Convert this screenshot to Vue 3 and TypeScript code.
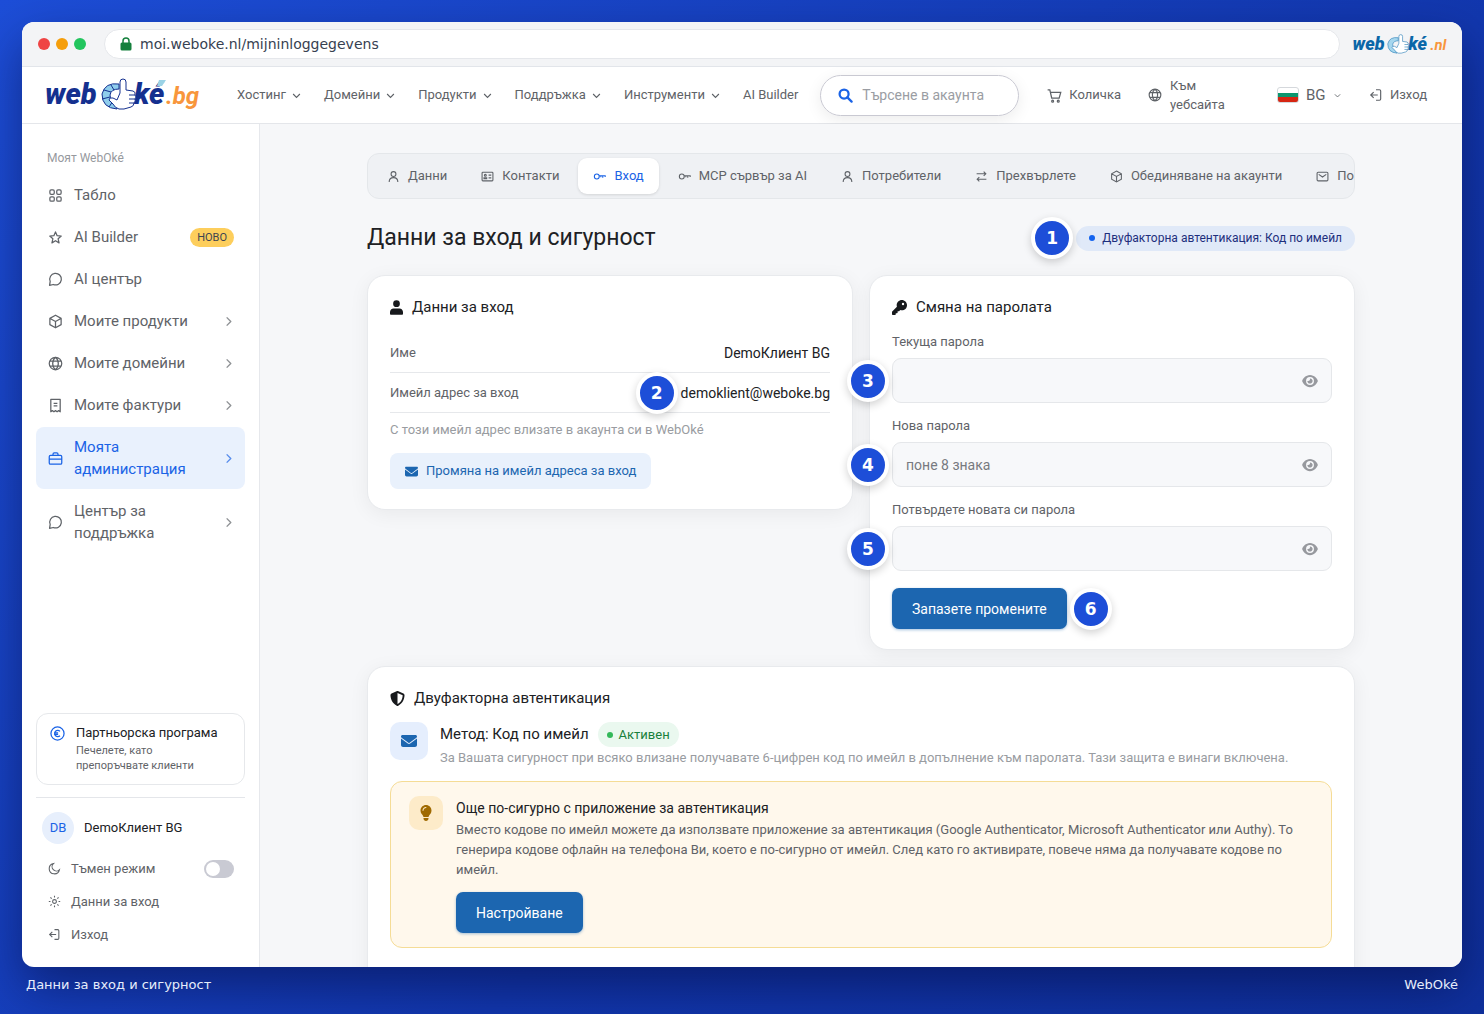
<script setup lang="ts">
import { ref } from 'vue'

interface MenuItem {
  label: string
  icon: string
  badge?: string
  expandable?: boolean
  active?: boolean
}

interface PasswordField {
  id: string
  label: string
  placeholder: string
  marker: number
}

// Outline glyphs on a 24-unit grid
const outline: Record<string, string> = {
  grid: 'M5 3h3a2 2 0 0 1 2 2v3a2 2 0 0 1-2 2H5a2 2 0 0 1-2-2V5a2 2 0 0 1 2-2zM16 3h3a2 2 0 0 1 2 2v3a2 2 0 0 1-2 2h-3a2 2 0 0 1-2-2V5a2 2 0 0 1 2-2zM5 14h3a2 2 0 0 1 2 2v3a2 2 0 0 1-2 2H5a2 2 0 0 1-2-2v-3a2 2 0 0 1 2-2zM16 14h3a2 2 0 0 1 2 2v3a2 2 0 0 1-2 2h-3a2 2 0 0 1-2-2v-3a2 2 0 0 1 2-2z',
  star: 'M12 3l2.6 6.1 6.6.6-5 4.4 1.5 6.5L12 17.2l-5.7 3.4 1.5-6.5-5-4.4 6.6-.6z',
  chat: 'M2.500 21.500l1-6.500a9.300 9.300 0 1 1 5 5z',
  box: 'M12 2l9 5v10l-9 5-9-5V7zM3.300 7.200L12 12l8.700-4.800M12 12v10',
  globe: 'M12 2a10 10 0 1 0 0 20 10 10 0 1 0 0-20zM12 2c-6 5-6 15 0 20M12 2c6 5 6 15 0 20M3.300 8h17.400M3.300 16h17.400',
  receipt: 'M4.500 2h15v20l-2.500-1.800-2.500 1.800-2.500-1.800L9.500 22 7 20.200 4.500 22zM9 8.500h6M9 12.500h6',
  briefcase: 'M4 7h16a2 2 0 0 1 2 2v10a2 2 0 0 1-2 2H4a2 2 0 0 1-2-2V9a2 2 0 0 1 2-2zM8 7V5a2 2 0 0 1 2-2h4a2 2 0 0 1 2 2v2M2 13h20',
  user: 'M12 3a4.500 4.500 0 1 0 0 9 4.500 4.500 0 1 0 0-9zM4 22c0-5 3-8 8-8s8 3 8 8',
  card: 'M3.500 4h17A1.500 1.500 0 0 1 22 5.500v13a1.500 1.500 0 0 1-1.500 1.500h-17A1.500 1.500 0 0 1 2 18.500v-13A1.500 1.500 0 0 1 3.500 4zM8 8a1.800 1.800 0 1 0 0 3.600A1.800 1.800 0 1 0 8 8zM5.500 16v-1.500h5V16zM14 9.500h5M14 14.500h5',
  key: 'M7 7.500a4.500 4.500 0 1 0 0 9 4.500 4.500 0 1 0 0-9zM11.500 10.500H22.500V13M18 10.500v4M14.500 10.500v3',
  swap: 'M3 7h17M16 3l4 4-4 4M21 17H4M8 13l-4 4 4 4',
  mail: 'M4 4h16a2 2 0 0 1 2 2v12a2 2 0 0 1-2 2H4a2 2 0 0 1-2-2V6a2 2 0 0 1 2-2zM5 8l7 5 7-5',
  cart: 'M1 3h3.500l3 13h12L22 7H5.500M9 19.500a1.500 1.500 0 1 0 0 3 1.500 1.500 0 1 0 0-3zM18 19.500a1.500 1.500 0 1 0 0 3 1.500 1.500 0 1 0 0-3z',
  exit: 'M12 3h6a2 2 0 0 1 2 2v14a2 2 0 0 1-2 2h-6M15 12H3M8 7l-5 5 5 5',
  moon: 'M10 3a7.500 7.500 0 0 0 11 11.500A9.500 9.500 0 1 1 10 3z',
  sun: 'M12 8.500a3.500 3.500 0 1 0 0 7 3.500 3.500 0 1 0 0-7zM12 1.500v3M12 19.500v3M1.500 12h3M19.500 12h3M4.500 4.500l2.200 2.200M17.300 17.300l2.200 2.200M4.500 19.500l2.200-2.200M17.300 6.700l2.200-2.200',
  down: 'M3 8l9 9 9-9',
  right: 'M8 3l9 9-9 9',
}

const eye =
  'M288 32c-80.800 0-145.500 36.800-192.600 80.600C48.600 156 17.300 208 2.500 243.700c-3.300 7.900-3.300 16.700 0 24.600C17.300 304 48.600 356 95.400 399.400 142.500 443.200 207.200 480 288 480s145.500-36.800 192.600-80.600c46.800-43.500 78.100-95.400 93-131.100 3.300-7.900 3.300-16.700 0-24.600-14.900-35.700-46.200-87.700-93-131.100C433.500 68.800 368.800 32 288 32zM144 256a144 144 0 1 1 288 0 144 144 0 1 1-288 0zm144-64c0 35.300-28.700 64-64 64-7.100 0-13.900-1.200-20.300-3.300-5.500-1.800-11.900 1.600-11.700 7.400.3 6.900 1.300 13.800 3.200 20.700 13.700 51.200 66.400 81.600 117.600 67.900s81.600-66.400 67.900-117.600c-11.100-41.500-47.800-69.400-88.600-71.100-5.800-.2-9.200 6.100-7.400 11.700 2.100 6.400 3.300 13.200 3.300 20.300z'
const envelope =
  'M48 64C21.500 64 0 85.500 0 112c0 15.100 7.100 29.300 19.200 38.400L236.800 313.600c11.400 8.500 27 8.500 38.400 0L492.800 150.400c12.100-9.100 19.200-23.300 19.200-38.400 0-26.500-21.500-48-48-48H48zM0 176v208c0 35.300 28.700 64 64 64h384c35.300 0 64-28.700 64-64V176L294.400 339.200c-22.800 17.100-54 17.100-76.800 0L0 176z'

// Logo mascot: lifebuoy behind a thumbs-up hand
const buoy = 'M74 6q-14-2-17 10 0 14 15 15l1-7q-8-1-8-7 1-6 9-6z'
const hand = 'M75 15V4q0-3 3-3t3 3v8l7 1q3 1 2 4 2 2 0 4 1 2-1 4 0 3-3 4l-7 2h-5q-4-1-6-5l-4-4q0-3 4-2l4 2z'
const knuckles = 'M90 17h-6M90 21h-6M89 25h-5'

const topNav: string[] = ['Хостинг', 'Домейни', 'Продукти', 'Поддръжка', 'Инструменти']

const menu: MenuItem[] = [
  { label: 'Табло', icon: 'grid' },
  { label: 'AI Builder', icon: 'star', badge: 'НОВО' },
  { label: 'AI център', icon: 'chat' },
  { label: 'Моите продукти', icon: 'box', expandable: true },
  { label: 'Моите домейни', icon: 'globe', expandable: true },
  { label: 'Моите фактури', icon: 'receipt', expandable: true },
  { label: 'Моята администрация', icon: 'briefcase', expandable: true, active: true },
  { label: 'Център за поддръжка', icon: 'chat', expandable: true },
]

const tabs: MenuItem[] = [
  { label: 'Данни', icon: 'user' },
  { label: 'Контакти', icon: 'card' },
  { label: 'Вход', icon: 'key', active: true },
  { label: 'MCP сървър за AI', icon: 'key' },
  { label: 'Потребители', icon: 'user' },
  { label: 'Прехвърлете', icon: 'swap' },
  { label: 'Обединяване на акаунти', icon: 'box' },
  { label: 'Поща', icon: 'mail' },
]

const fields: PasswordField[] = [
  { id: 'current', label: 'Текуща парола', placeholder: '', marker: 3 },
  { id: 'new', label: 'Нова парола', placeholder: 'поне 8 знака', marker: 4 },
  { id: 'confirm', label: 'Потвърдете новата си парола', placeholder: '', marker: 5 },
]

const passwords = ref<Record<string, string>>({ current: '', new: '', confirm: '' })
const revealed = ref<Record<string, boolean>>({})
const darkMode = ref(false)
const language = ref('BG')
const query = ref('')

function toggleReveal(id: string): void {
  revealed.value[id] = !revealed.value[id]
}
</script>

<template>
  <div class="stage">
    <div class="window">
      <div class="chrome">
        <div class="lights"><i class="red"></i><i class="amber"></i><i class="green"></i></div>
        <div class="address">
          <svg class="lock" viewBox="0 0 12 14"><path d="M3 7V4a3 3 0 0 1 6 0v3" fill="none" stroke="#15803d" stroke-width="1.500" /><rect x="0.500" y="5.500" width="11" height="8" rx="1.500" fill="#15803d" /></svg>
          <span>moi.weboke.nl/mijninloggegevens</span>
        </div>
        <svg class="logo-small" viewBox="0 0 152 34" aria-label="WebOké.nl">
          <g fill="#0a67a8" font-size="29"><text x="0" y="26">web</text><text x="90" y="26">ké</text></g>
          <text class="tld" x="126" y="26" font-size="24">.nl</text>
          <g stroke="#2d80b8" stroke-width="1" stroke-linejoin="round">
            <path :d="buoy" fill="#a5d6ee" />
            <path :d="hand" fill="#fff" />
            <path :d="knuckles" fill="none" />
          </g>
        </svg>
      </div>

      <header class="topbar">
        <a class="brand" href="#">
          <svg viewBox="0 0 152 34" aria-label="WebOké.bg">
            <g fill="#14308f" font-size="29"><text x="0" y="26">web</text><text x="89" y="26">ké</text></g>
            <text class="tld" x="121" y="26" font-size="24">.bg</text>
            <g stroke="#14308f" stroke-width="1" stroke-linejoin="round">
              <path :d="buoy" fill="#8fcdec" />
              <path d="M66 7l3 5M59 12l7 2M57 21l8-2M64 29l4-6" fill="none" />
              <path :d="hand" fill="#fff" />
              <path :d="knuckles" fill="none" />
            </g>
            <path d="M114 2h7l-4 6h-5z" fill="#9bd3e6" />
          </svg>
        </a>
        <nav class="mainnav">
          <button v-for="item in topNav" :key="item" type="button">
            {{ item }}
            <svg class="caret" viewBox="0 0 24 24"><path :d="outline.down" /></svg>
          </button>
          <a href="#">AI Builder</a>
        </nav>
        <label class="search">
          <svg viewBox="0 0 16 16"><circle cx="6.500" cy="6.500" r="4.800" /><path d="M10 10l4.500 4.500" /></svg>
          <input v-model="query" type="search" placeholder="Търсене в акаунта" aria-label="Търсене в акаунта" />
        </label>
        <a class="action cart" href="#"><svg viewBox="0 0 24 24"><path :d="outline.cart" /></svg>Количка</a>
        <a class="action site" href="#"><svg viewBox="0 0 24 24"><path :d="outline.globe" /></svg><span>Към уебсайта</span></a>
        <label class="language">
          <span class="flag"></span>
          <select v-model="language" aria-label="Език"><option>BG</option></select>
          <svg class="caret" viewBox="0 0 24 24"><path :d="outline.down" /></svg>
        </label>
        <a class="action" href="#"><svg viewBox="0 0 24 24"><path :d="outline.exit" /></svg>Изход</a>
      </header>

      <div class="body">
        <aside class="sidebar">
          <p class="side-title">Моят WebOké</p>
          <nav class="menu">
            <a v-for="item in menu" :key="item.label" href="#" :class="{ active: item.active }">
              <svg viewBox="0 0 24 24"><path :d="outline[item.icon]" /></svg>
              <span>{{ item.label }}</span>
              <em v-if="item.badge">{{ item.badge }}</em>
              <svg v-if="item.expandable" class="more" viewBox="0 0 24 24"><path :d="outline.right" /></svg>
            </a>
          </nav>
          <a class="partner" href="#">
            <svg viewBox="0 0 24 24"><circle cx="12" cy="12" r="10.500" /><path d="M16 8.500a5 5 0 1 0 0 7M6.500 10.800h6.500M6.500 13.200h6.500" /></svg>
            <span><strong>Партньорска програма</strong><small>Печелете, като препоръчвате клиенти</small></span>
          </a>
          <div class="account">
            <div class="who"><span class="avatar">DB</span><span>DemoКлиент BG</span></div>
            <label class="row">
              <svg viewBox="0 0 24 24"><path :d="outline.moon" /></svg>
              <span>Тъмен режим</span>
              <input v-model="darkMode" type="checkbox" role="switch" />
            </label>
            <a class="row" href="#"><svg viewBox="0 0 24 24"><path :d="outline.sun" /></svg><span>Данни за вход</span></a>
            <a class="row" href="#"><svg viewBox="0 0 24 24"><path :d="outline.exit" /></svg><span>Изход</span></a>
          </div>
        </aside>

        <main class="content">
          <div class="inner">
            <nav class="tabs">
              <a v-for="tab in tabs" :key="tab.label" href="#" :class="{ active: tab.active }">
                <svg viewBox="0 0 24 24"><path :d="outline[tab.icon]" /></svg>{{ tab.label }}
              </a>
            </nav>

            <div class="heading">
              <h1>Данни за вход и сигурност</h1>
              <span class="status"><b class="marker before">1</b><i></i>Двуфакторна автентикация: Код по имейл</span>
            </div>

            <div class="cards">
              <section class="card">
                <h2><svg class="w13" viewBox="0 0 448 512"><path d="M224 240a116 116 0 1 0 0-232 116 116 0 1 0 0 232zM120 288C54 288 0 342 0 408v72c0 16 12 28 28 28h392c16 0 28-12 28-28v-72c0-66-54-120-120-120H120z" /></svg>Данни за вход</h2>
                <dl>
                  <div><dt>Име</dt><dd>DemoКлиент BG</dd></div>
                  <div><dt>Имейл адрес за вход</dt><dd><b class="marker before">2</b>demoklient@weboke.bg</dd></div>
                </dl>
                <p class="note">С този имейл адрес влизате в акаунта си в WebOké</p>
                <button class="soft" type="button"><svg viewBox="0 0 512 512"><path :d="envelope" /></svg>Промяна на имейл адреса за вход</button>
              </section>

              <section class="card">
                <h2><svg class="w15" viewBox="0 0 512 512"><path d="M336 352c97.200 0 176-78.800 176-176S433.200 0 336 0 160 78.800 160 176c0 18.700 2.900 36.600 8.300 53.400L7 391c-4.500 4.500-7 10.600-7 17v80c0 13.300 10.700 24 24 24h80c13.300 0 24-10.700 24-24v-40h40c13.300 0 24-10.700 24-24v-40h40c6.400 0 12.500-2.500 17-7l33.300-33.300c16.900 5.400 34.800 8.300 53.400 8.300zM376 96a40 40 0 1 1 0 80 40 40 0 1 1 0-80z" /></svg>Смяна на паролата</h2>
                <form @submit.prevent>
                  <div v-for="field in fields" :key="field.id" class="field">
                    <label :for="field.id">{{ field.label }}</label>
                    <div class="control">
                      <b class="marker before">{{ field.marker }}</b>
                      <input :id="field.id" v-model="passwords[field.id]" :type="revealed[field.id] ? 'text' : 'password'" :placeholder="field.placeholder" />
                      <button type="button" aria-label="Покажи паролата" @click="toggleReveal(field.id)"><svg viewBox="0 0 576 512"><path :d="eye" /></svg></button>
                    </div>
                  </div>
                  <div class="submit"><button class="primary" type="submit">Запазете промените</button><b class="marker after">6</b></div>
                </form>
              </section>

              <section class="card wide">
                <h2><svg class="w15" viewBox="0 0 512 512"><path d="M256 0c4.600 0 9.200 1 13.400 2.900l188.300 79.900c22 9.300 38.400 31 38.300 57.200-.5 99.200-41.300 280.700-213.600 363.200-16.700 8-36.100 8-52.800 0C57.300 420.700 16.500 239.200 16 140c-.1-26.200 16.300-47.900 38.300-57.200L242.700 2.900C246.800 1 251.400 0 256 0zm0 66.800v378.100C394 378 431.100 230.100 432 141.400L256 66.800z" /></svg>Двуфакторна автентикация</h2>
                <div class="method">
                  <span class="tile"><svg viewBox="0 0 512 512"><path :d="envelope" /></svg></span>
                  <div>
                    <h3>Метод: Код по имейл <span class="ok"><i></i>Активен</span></h3>
                    <p>За Вашата сигурност при всяко влизане получавате 6-цифрен код по имейл в допълнение към паролата. Тази защита е винаги включена.</p>
                  </div>
                </div>
                <div class="tip">
                  <span class="bulb"><svg viewBox="0 0 384 512"><path d="M272 384c9.600-31.900 29.500-59.100 49.200-86.200 5.200-7.100 10.400-14.200 15.400-21.400 19.800-28.500 31.400-63 31.400-100.300C368 78.800 289.200 0 192 0S16 78.800 16 176c0 37.300 11.600 71.900 31.400 100.300 5 7.200 10.200 14.300 15.400 21.400 19.800 27.100 39.700 54.400 49.200 86.200h160zM192 512c44.200 0 80-35.800 80-80v-16H112v16c0 44.200 35.800 80 80 80zM112 176c0 8.800-7.200 16-16 16s-16-7.200-16-16c0-61.900 50.100-112 112-112 8.800 0 16 7.200 16 16s-7.200 16-16 16c-44.200 0-80 35.800-80 80z" /></svg></span>
                  <div>
                    <h3>Още по-сигурно с приложение за автентикация</h3>
                    <p>Вместо кодове по имейл можете да използвате приложение за автентикация (Google Authenticator, Microsoft Authenticator или Authy). То генерира кодове офлайн на телефона Ви, което е по-сигурно от имейл. След като го активирате, повече няма да получавате кодове по имейл.</p>
                    <button class="primary" type="button">Настройване</button>
                  </div>
                </div>
              </section>
            </div>
          </div>
        </main>
      </div>
    </div>
    <footer class="caption"><span>Данни за вход и сигурност</span><span>WebOké</span></footer>
  </div>
</template>

<style>
body {
  margin: 0;
}
</style>

<style scoped>
* {
  box-sizing: border-box;
}
.stage {
  display: flex;
  flex-direction: column;
  height: 100vh;
  padding: 22px 22px 0;
  overflow: hidden;
  background: linear-gradient(135deg, #1d4ed8 0%, #1237ae 60%, #0f309c 100%);
  font: 400 13px/20px Roboto, 'Noto Sans', sans-serif;
  color: #5f6368;
}
a {
  color: inherit;
  text-decoration: none;
}
button,
input,
select {
  font: inherit;
  color: inherit;
}
button {
  padding: 0;
  border: 0;
  background: none;
  cursor: pointer;
}
svg {
  flex: none;
}
h1,
h2,
h3,
p,
dl,
dd {
  margin: 0;
  font-weight: 400;
}
.window {
  display: flex;
  flex: 1;
  flex-direction: column;
  min-height: 0;
  overflow: hidden;
  border-radius: 12px;
  background: #fff;
  box-shadow: 0 20px 50px rgba(0, 0, 40, 0.45);
}
.chrome {
  display: flex;
  flex: none;
  align-items: center;
  height: 45px;
  padding: 0 15px 0 16px;
  border-bottom: 1px solid #e2e5ea;
  background: #f3f4f6;
}
.lights {
  display: flex;
  gap: 6px;
  margin-right: 18px;
}
.lights i {
  width: 12px;
  height: 12px;
  border-radius: 50%;
}
.red {
  background: #ef4444;
}
.amber {
  background: #f59e0b;
}
.green {
  background: #22c55e;
}
.address {
  display: flex;
  flex: 1;
  align-items: center;
  gap: 8px;
  height: 30px;
  margin-right: 12px;
  padding: 0 15px;
  border: 1px solid #e5e7eb;
  border-radius: 15px;
  background: #fff;
  color: #374151;
  font: 14px/20px 'DejaVu Sans', sans-serif;
}
.lock {
  width: 12px;
  height: 14px;
}
.logo-small {
  width: 95px;
  height: 21px;
}
.logo-small text,
.brand text {
  font-family: Roboto, sans-serif;
  font-style: italic;
  font-weight: 900;
}
.logo-small .tld,
.brand .tld {
  fill: #f8963c;
  font-weight: 700;
}
.topbar {
  display: flex;
  flex: none;
  align-items: center;
  height: 57px;
  padding: 0 35px 0 23px;
  border-bottom: 1px solid #e4e6ea;
}
.brand {
  display: flex;
  margin-right: 40px;
}
.brand svg {
  width: 152px;
  height: 34px;
}
.brand svg,
.logo-small {
  overflow: visible;
}
.mainnav {
  display: flex;
  gap: 23px;
  margin-right: auto;
  white-space: nowrap;
}
.mainnav button {
  display: flex;
  align-items: center;
  gap: 6px;
}
.caret {
  width: 9px;
  height: 9px;
  fill: none;
  stroke: currentColor;
  stroke-width: 3;
}
.search {
  display: flex;
  align-items: center;
  gap: 9px;
  width: 199px;
  height: 41px;
  margin-right: 28px;
  padding: 0 17px;
  border: 1px solid #c9c9d2;
  border-radius: 21px;
  box-shadow: 0 4px 16px rgba(0, 0, 0, 0.08);
}
.search svg {
  width: 15px;
  height: 15px;
  fill: none;
  stroke: #1a63e6;
  stroke-width: 2.4;
  stroke-linecap: round;
}
.search input {
  width: 100%;
  min-width: 0;
  padding: 0;
  border: 0;
  outline: 0;
  background: none;
  font-size: 14px;
}
.search input::placeholder {
  color: #9a9da3;
}
.action {
  display: flex;
  align-items: center;
  gap: 7px;
}
.action svg {
  width: 14px;
  height: 14px;
  fill: none;
  stroke: currentColor;
  stroke-width: 2;
}
.cart {
  margin-right: 27px;
}
.cart svg {
  width: 15px;
  height: 15px;
}
.site {
  gap: 8px;
  margin-right: 32px;
  line-height: 19px;
}
.site span {
  width: 75px;
}
.language {
  display: flex;
  align-items: center;
  margin-right: 28px;
}
.flag {
  width: 22px;
  height: 16px;
  margin-right: 7px;
  border: 1px solid #d5d8dc;
  border-radius: 3px;
  background: linear-gradient(#fff 33%, #0b966e 33% 66%, #d62612 66%);
}
.language select {
  width: 28px;
  padding: 0;
  border: 0;
  outline: 0;
  appearance: none;
  background: none;
  font-size: 15px;
}
.language .caret {
  width: 7px;
  height: 7px;
}
.body {
  display: flex;
  flex: 1;
  min-height: 0;
}
.sidebar {
  display: flex;
  flex: none;
  flex-direction: column;
  width: 238px;
  padding: 24px 14px 16px;
  border-right: 1px solid #e6e8ec;
}
.side-title {
  margin-bottom: 7px;
  padding-left: 11px;
  color: #96999e;
  font-size: 12px;
}
.menu {
  display: flex;
  flex-direction: column;
  gap: 2px;
  font-size: 15px;
  line-height: 22px;
}
.menu a {
  display: flex;
  align-items: center;
  gap: 11px;
  padding: 9px 11px 9px 12px;
  border-radius: 8px;
}
.menu a > span {
  flex: 1;
}
.menu svg {
  width: 15px;
  height: 15px;
  fill: none;
  stroke: currentColor;
  stroke-width: 2;
  stroke-linejoin: round;
}
.menu .more {
  width: 11px;
  height: 11px;
  stroke-width: 3;
  opacity: 0.7;
}
.menu a.active {
  background: #e9f1fd;
  color: #1a63e6;
}
.menu em {
  padding: 0 7px;
  border-radius: 10px;
  background: #fdce5c;
  color: #3d4450;
  font-size: 11px;
  font-style: normal;
  line-height: 19px;
}
.partner {
  display: flex;
  gap: 11px;
  margin-top: auto;
  padding: 8px 24px 11px 13px;
  border: 1px solid #e6e8eb;
  border-radius: 12px;
}
.partner svg {
  width: 15px;
  height: 15px;
  margin-top: 4px;
  fill: none;
  stroke: #1a63e6;
  stroke-width: 2;
}
.partner strong,
.partner small {
  display: block;
}
.partner strong {
  color: #202124;
  font-weight: 400;
  line-height: 21px;
}
.partner small {
  font-size: 11px;
  line-height: 15px;
}
.account {
  margin-top: 12px;
  padding-top: 14px;
  border-top: 1px solid #e4e6ea;
}
.who {
  display: flex;
  align-items: center;
  gap: 10px;
  margin-bottom: 8px;
  padding-left: 6px;
  color: #202124;
}
.avatar {
  width: 32px;
  border-radius: 50%;
  background: #e7effc;
  color: #1a63e6;
  line-height: 32px;
  text-align: center;
}
.row {
  display: flex;
  align-items: center;
  gap: 10px;
  height: 33px;
  padding: 0 11px 0 12px;
}
.row span {
  flex: 1;
}
.row svg {
  width: 13px;
  height: 13px;
  fill: none;
  stroke: currentColor;
  stroke-width: 2;
}
.row input {
  display: flex;
  align-items: center;
  width: 30px;
  height: 18px;
  margin: 0;
  padding: 2px;
  border-radius: 9px;
  appearance: none;
  background: #c9cad3;
}
.row input::before {
  width: 14px;
  height: 14px;
  border-radius: 50%;
  background: #fff;
  content: '';
}
.row input:checked {
  justify-content: flex-end;
  background: #1a63e6;
}
.content {
  flex: 1;
  min-width: 0;
  padding: 29px 24px 0;
  overflow: hidden;
  background: #f6f7f9;
}
.inner {
  max-width: 988px;
  margin: 0 auto;
}
.tabs {
  display: flex;
  gap: 4px;
  height: 46px;
  padding: 4px;
  overflow: hidden;
  border: 1px solid #e4e7ea;
  border-radius: 12px;
  background: #eff1f4;
}
.tabs a {
  display: flex;
  flex: none;
  align-items: center;
  gap: 8px;
  padding: 0 15px;
  border-radius: 9px;
}
.tabs svg {
  width: 13px;
  height: 13px;
  fill: none;
  stroke: currentColor;
  stroke-width: 2;
}
.tabs a.active {
  background: #fff;
  color: #1a63e6;
  box-shadow: 0 1px 3px rgba(0, 0, 0, 0.12);
}
.heading {
  display: flex;
  align-items: center;
  justify-content: space-between;
  margin: 23px 0 21px;
}
h1 {
  color: #202124;
  font-size: 23px;
  line-height: 32px;
}
.status {
  position: relative;
  display: flex;
  align-items: center;
  gap: 7px;
  padding: 0 13px;
  border-radius: 13px;
  background: #e0e9f8;
  color: #1e2f7d;
  font-size: 12px;
  line-height: 25px;
}
.status i,
.ok i {
  width: 6px;
  height: 6px;
  border-radius: 50%;
  background: #1363ef;
}
.marker {
  position: absolute;
  z-index: 1;
  top: 50%;
  width: 42px;
  height: 42px;
  margin-top: -21px;
  border: 4px solid #fff;
  border-radius: 50%;
  background: #1d4ed8;
  box-shadow: 0 3px 8px rgba(0, 0, 0, 0.18);
  color: #fff;
  font: 700 17px/34px 'DejaVu Sans', sans-serif;
  text-align: center;
}
.marker.before {
  left: -45px;
}
.marker.after {
  right: -45px;
}
.cards {
  display: grid;
  grid-template-columns: 1fr 1fr;
  align-items: start;
  gap: 16px;
}
.card {
  padding: 20px 22px;
  border: 1px solid #e8eaed;
  border-radius: 18px;
  background: #fff;
  box-shadow: 0 4px 20px rgba(0, 0, 0, 0.06);
}
.wide {
  grid-column: 1 / -1;
  min-height: 340px;
}
h2 {
  display: flex;
  align-items: center;
  gap: 9px;
  color: #202124;
  font-size: 15px;
  line-height: 22px;
}
h2 svg {
  height: 15px;
  fill: #17191c;
}
.w13 {
  width: 13px;
}
.w15 {
  width: 15px;
}
dl {
  margin-top: 15px;
}
dl div {
  display: flex;
  align-items: center;
  justify-content: space-between;
  height: 40px;
  border-bottom: 1px solid #e6e8eb;
}
dd {
  position: relative;
  color: #202124;
  font-size: 14px;
}
.note {
  margin: 7px 0 13px;
  color: #999ca1;
}
.soft {
  display: flex;
  align-items: center;
  gap: 8px;
  height: 36px;
  padding: 0 15px;
  border-radius: 8px;
  background: #e9f1fc;
  color: #1c66b0;
}
.soft svg {
  width: 13px;
  height: 13px;
  fill: currentColor;
}
form {
  padding-top: 14px;
}
.field {
  margin-bottom: 13px;
}
.field label {
  display: block;
  margin-bottom: 6px;
}
.control {
  position: relative;
  display: flex;
  height: 45px;
  border: 1px solid #e5e7ea;
  border-radius: 9px;
  background: #f7f8fa;
}
.control .marker {
  left: -46px;
}
.control input {
  flex: 1;
  min-width: 0;
  padding: 0 13px;
  border: 0;
  outline: 0;
  background: none;
  font-size: 14px;
}
.control input::placeholder {
  color: #777a80;
}
.control button {
  display: flex;
  align-items: center;
  padding: 0 13px;
}
.control svg {
  width: 16px;
  height: 14px;
  fill: #97999e;
}
.submit {
  position: relative;
  width: fit-content;
  margin-top: 17px;
}
.primary {
  height: 41px;
  padding: 0 20px;
  border-radius: 7px;
  background: #1c66b0;
  box-shadow: 0 1px 3px rgba(28, 102, 176, 0.4);
  color: #fff;
  font-size: 14px;
}
.method {
  display: flex;
  gap: 12px;
  margin: 13px 0;
}
.tile,
.bulb {
  display: flex;
  flex: none;
  align-items: center;
  justify-content: center;
  width: 38px;
  height: 38px;
  border-radius: 10px;
  background: #e5eefd;
}
.tile svg {
  width: 16px;
  height: 16px;
  fill: #1c66b0;
}
h3 {
  display: flex;
  align-items: center;
  gap: 9px;
  color: #202124;
  font-size: 15px;
  line-height: 25px;
}
.method p {
  line-height: 21px;
  color: #999ca1;
}
.ok {
  display: flex;
  align-items: center;
  gap: 6px;
  padding: 0 9px;
  border-radius: 13px;
  background: #eaf8ef;
  color: #19803c;
  font-size: 13px;
}
.ok i {
  background: #34b85a;
}
.tip {
  display: flex;
  gap: 13px;
  padding: 14px 18px;
  border: 1px solid #f5dc96;
  border-radius: 12px;
  background: #fff8ec;
}
.tip h3 {
  font-size: 14px;
  line-height: 24px;
}
.bulb {
  width: 34px;
  height: 34px;
  background: #fdebc9;
}
.bulb svg {
  width: 12px;
  height: 16px;
  fill: #a06a00;
}
.tip p {
  margin-bottom: 12px;
}
.caption {
  display: flex;
  flex: none;
  justify-content: space-between;
  height: 47px;
  padding: 8px 4px;
  color: #e6edfb;
  font: 13px/20px 'DejaVu Sans', sans-serif;
}
</style>
